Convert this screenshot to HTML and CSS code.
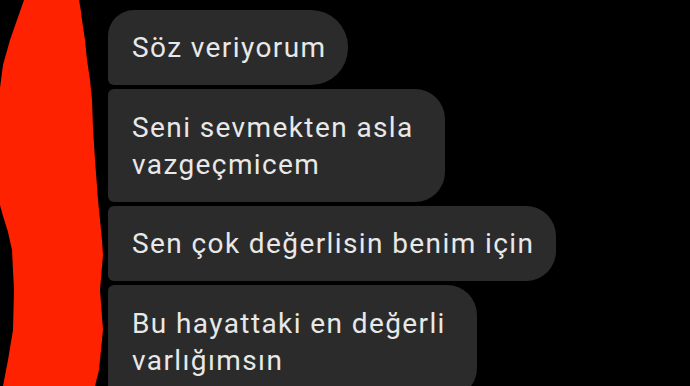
FILE: index.html
```html
<!DOCTYPE html>
<html lang="tr">
<head>
  <meta charset="UTF-8" />
  <title>Mesajlar</title>
  <link rel="stylesheet" href="styles.css">
</head>
<body>
  <div class="chat">
    <div class="bubble first">Söz veriyorum</div>
    <div class="bubble multi">Seni sevmekten asla<br>vazgeçmicem</div>
    <div class="bubble">Sen çok değerlisin benim için</div>
    <div class="bubble multi">Bu hayattaki en değerli<br>varlığımsın</div>
  </div>

  <!-- red scribble covering the avatar -->
  <svg class="scribble" width="690" height="386" viewBox="0 0 690 386">
    <path d="M24 0 L79 0 Q81 10 82 20 L85 40 L87 60 L90 80 L92 100 L93 128 L95 160 L98 200 L102 240 L103 255 L100 290 L103 330 L99 370 L95 386 L3 386 L8 360 L13 330 L14 290 L12 250 L8 232 L3 216 L0 205 L0 88 L3 65 L10 40 L17 20 Z" fill="#ff2200"/>
  </svg>
</body>
</html>
```

FILE: styles.css
```css
body {
  margin: 0;
  background: #000;
  font-family: Roboto, "Noto Sans", sans-serif;
  width: 690px;
  height: 386px;
  overflow: hidden;
  position: relative;
}
.chat {
  display: flex;
  flex-direction: column;
  align-items: flex-start;
  gap: 4px;
  padding: 10px 0 0 108px;
}
.bubble {
  background: #2b2b2b;
  color: #e8e8e8;
  font-size: 28px;
  letter-spacing: 1.4px;
  line-height: 37px;
  padding: 19px 22px 19px 24px;
  border-radius: 6px 30px 30px 6px;
}
.bubble.first {
  border-radius: 26px 37px 37px 6px;
}
.bubble.multi {
  padding: 20px 31px 19px 24px;
}
.scribble {
  position: absolute;
  top: 0;
  left: 0;
  pointer-events: none;
}
```
